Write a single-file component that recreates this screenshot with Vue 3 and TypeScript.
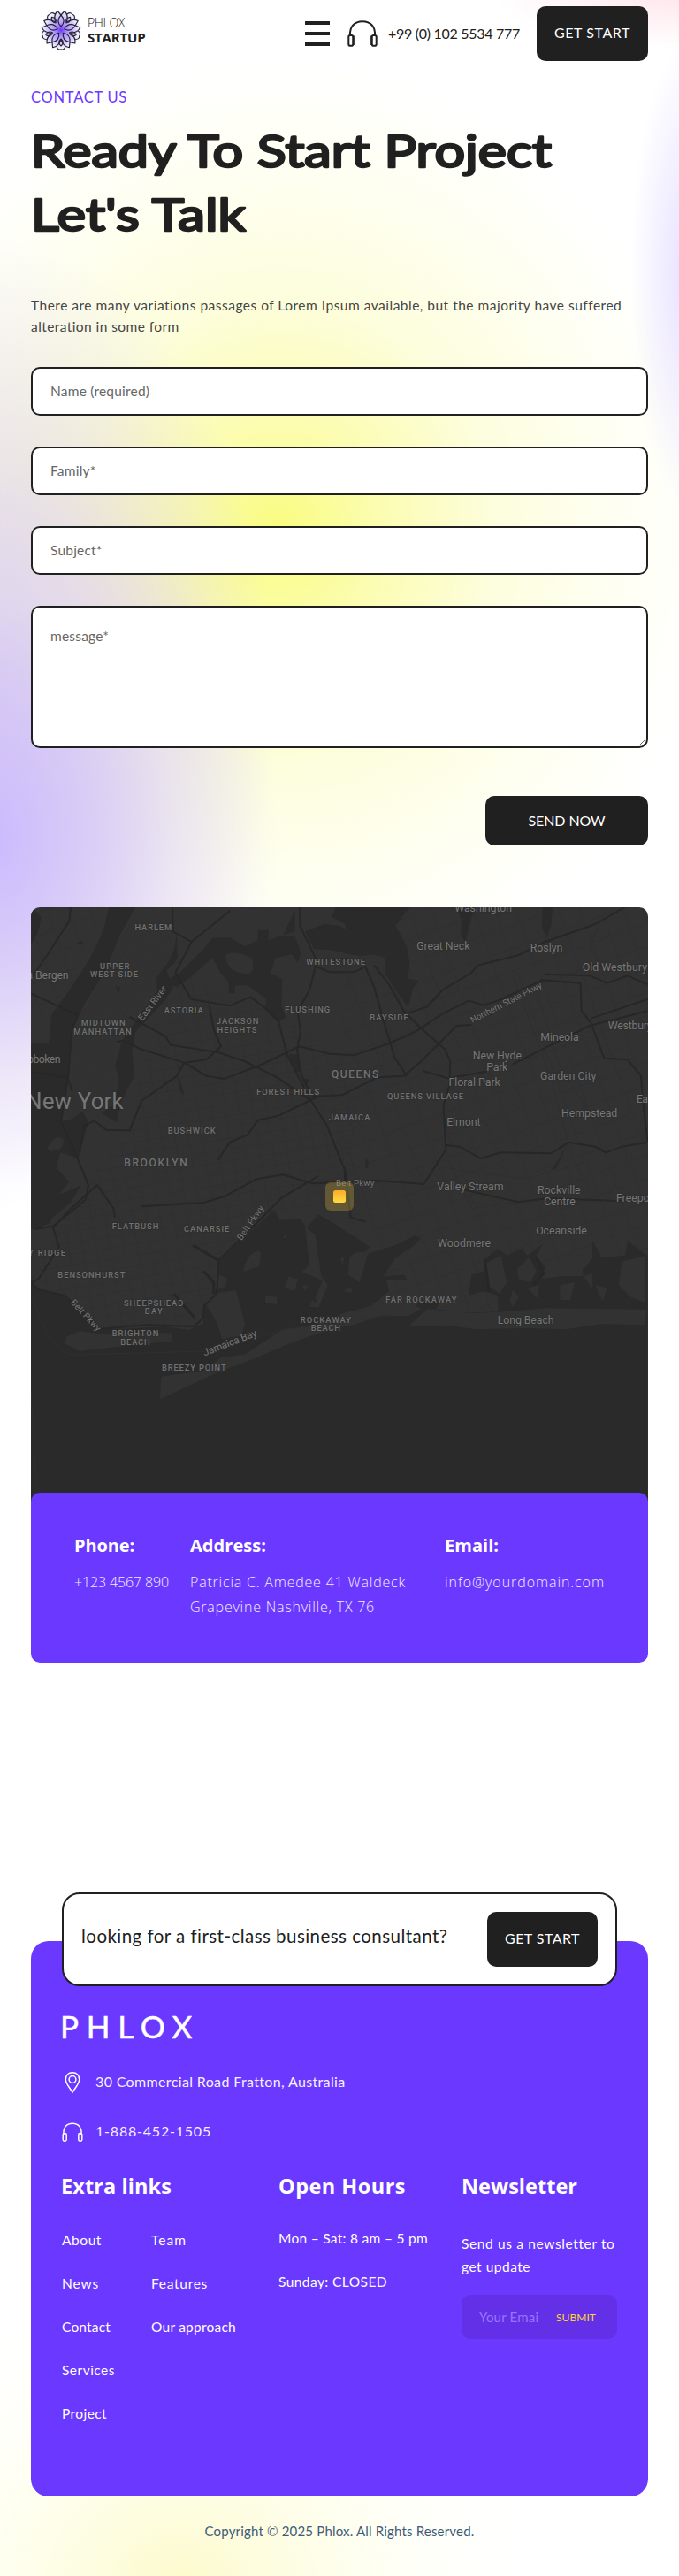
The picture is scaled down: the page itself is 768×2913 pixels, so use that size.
<script setup lang="ts">
import type { Directive } from 'vue'

// Tracks a single line of text so that it fills its design width.
const vFit: Directive<HTMLElement, number> = {
  mounted(el, { value }) {
    const count = (el.textContent ?? '').trim().length
    const natural = el.getBoundingClientRect().width
    if (count > 0) el.style.letterSpacing = `${((value - natural) / count).toFixed(3)}px`
  },
}

interface MapLabel { text: string; x: number; y: number; w: number; size?: number; angle?: number }

const districts: MapLabel[] = [
  { text: 'HARLEM', x: 520, y: 95, w: 125 },
  { text: 'UPPER', x: 389, y: 228, w: 100 },
  { text: 'WEST SIDE', x: 387, y: 256, w: 162 },
  { text: 'MIDTOWN', x: 350, y: 421, w: 150 },
  { text: 'MANHATTAN', x: 348, y: 449, w: 196 },
  { text: 'ASTORIA', x: 623, y: 378, w: 132 },
  { text: 'JACKSON', x: 806, y: 415, w: 143 },
  { text: 'HEIGHTS', x: 804, y: 443, w: 135 },
  { text: 'FLUSHING', x: 1043, y: 374, w: 153 },
  { text: 'WHITESTONE', x: 1139, y: 213, w: 200 },
  { text: 'FOREST HILLS', x: 977, y: 654, w: 213 },
  { text: 'BUSHWICK', x: 650, y: 787, w: 162 },
  { text: 'JAMAICA', x: 1185, y: 741, w: 140 },
  { text: 'BAYSIDE', x: 1320, y: 402, w: 130 },
  { text: 'QUEENS VILLAGE', x: 1443, y: 669, w: 258 },
  { text: 'BROOKLYN', x: 528, y: 896, w: 215, size: 36 },
  { text: 'QUEENS', x: 1205, y: 598, w: 160, size: 36 },
  { text: 'FLATBUSH', x: 459, y: 1110, w: 158 },
  { text: 'CANARSIE', x: 701, y: 1119, w: 154 },
  { text: 'BAY RIDGE', x: 138, y: 1200, w: 168 },
  { text: 'BENSONHURST', x: 310, y: 1274, w: 228 },
  { text: 'SHEEPSHEAD', x: 521, y: 1371, w: 202 },
  { text: 'BAY', x: 521, y: 1399, w: 60 },
  { text: 'BRIGHTON', x: 459, y: 1473, w: 158 },
  { text: 'BEACH', x: 459, y: 1502, w: 100 },
  { text: 'ROCKAWAY', x: 1105, y: 1427, w: 172 },
  { text: 'BEACH', x: 1105, y: 1455, w: 100 },
  { text: 'BREEZY POINT', x: 658, y: 1591, w: 218 },
  { text: 'FAR ROCKAWAY', x: 1429, y: 1358, w: 240 },
]

const towns: MapLabel[] = [
  { text: 'n Bergen', x: 162, y: 260, w: 142 },
  { text: 'Hoboken', x: 137, y: 545, w: 138 },
  { text: 'New York', x: 253, y: 702, w: 332, size: 78 },
  { text: 'Washington', x: 1640, y: 33, w: 195 },
  { text: 'Great Neck', x: 1504, y: 163, w: 181 },
  { text: 'Roslyn', x: 1854, y: 169, w: 110 },
  { text: 'Old Westbury', x: 2086, y: 234, w: 220 },
  { text: 'Westbury', x: 2138, y: 433, w: 150 },
  { text: 'Mineola', x: 1899, y: 470, w: 130 },
  { text: 'New Hyde', x: 1687, y: 535, w: 166 },
  { text: 'Park', x: 1687, y: 573, w: 72 },
  { text: 'Floral Park', x: 1610, y: 623, w: 175 },
  { text: 'Garden City', x: 1928, y: 604, w: 190 },
  { text: 'East Meadow', x: 2262, y: 682, w: 204 },
  { text: 'Elmont', x: 1573, y: 759, w: 115 },
  { text: 'Hempstead', x: 2000, y: 728, w: 190 },
  { text: 'Valley Stream', x: 1596, y: 977, w: 226 },
  { text: 'Rockville', x: 1897, y: 991, w: 146 },
  { text: 'Centre', x: 1899, y: 1029, w: 107 },
  { text: 'Freeport', x: 2160, y: 1017, w: 138 },
  { text: 'Oceanside', x: 1905, y: 1128, w: 173 },
  { text: 'Woodmere', x: 1575, y: 1169, w: 180 },
  { text: 'Long Beach', x: 1784, y: 1431, w: 192 },
  { text: 'Belt Pkwy', x: 1205, y: 962, w: 130, size: 29 },
  { text: 'East River', x: 525, y: 350, w: 138, size: 31, angle: -53 },
  { text: 'Northern State Pkwy', x: 1722, y: 350, w: 268, size: 30, angle: -27 },
  { text: 'Belt Pkwy', x: 858, y: 1094, w: 136, size: 30, angle: -55 },
  { text: 'Belt Pkwy', x: 284, y: 1409, w: 134, size: 30, angle: 47 },
  { text: 'Jamaica Bay', x: 784, y: 1506, w: 192, size: 34, angle: -21 },
]

const fields = ['Name (required)', 'Family*', 'Subject*']
const linksA = [['About', 45], ['News', 42], ['Contact', 55], ['Services', 60], ['Project', 51]] as const
const linksB = [['Team', 40], ['Features', 64], ['Our approach', 96]] as const
const spokes = [0, 72, 144, 216, 288]
</script>

<template>
  <div class="page">
    <header class="header">
      <div class="logo">
        <svg class="flower" viewBox="-25 -25 50 50" width="50" height="50">
          <defs>
            <radialGradient id="glow">
              <stop offset="0" stop-color="#6a30ff" />
              <stop offset=".25" stop-color="#9474fb" stop-opacity=".85" />
              <stop offset=".65" stop-color="#c9bbfc" stop-opacity=".7" />
              <stop offset="1" stop-color="#fff" stop-opacity="0" />
            </radialGradient>
          </defs>
          <circle r="25" fill="url(#glow)" />
          <g fill="none" stroke="#25222f" stroke-width="1.150" stroke-linejoin="round">
            <g v-for="a in spokes" :key="a" :transform="`rotate(${a})`">
              <path d="M0-4C-4-8-4-12.500 0-17C4-12.500 4-8 0-4Z" />
              <path d="M0-17L-4-21.500C-7-18.500-8-14-6.500-9M0-17L4-21.500C7-18.500 8-14 6.500-9" />
              <path d="M7-18C10-20.500 12-19 13-17.500" />
              <path d="M-7-18C-10-20.500-12-19-13-17.500" />
            </g>
            <g v-for="a in spokes" :key="`s${a}`" :transform="`rotate(${a + 36})`">
              <path d="M0-10C-3-12.500-3-15.500 0-18C3-15.500 3-12.500 0-10Z" />
            </g>
          </g>
        </svg>
        <div class="brand">
          <div><span v-fit="42" class="brand-top">PHLOX</span></div>
          <div><span v-fit="65.500" class="brand-bottom">STARTUP</span></div>
        </div>
      </div>
      <div class="burger"><i /><i /><i /></div>
      <svg class="phones" viewBox="0 0 34 30" width="34" height="30" fill="none" stroke="#202020" stroke-width="2">
        <path d="M3 18C2 7 8 1.300 17 1.300S32 7 31 18" />
        <rect x="1.300" y="17" width="5" height="11.700" rx="1.800" />
        <rect x="27.700" y="17" width="5" height="11.700" rx="1.800" />
        <path d="M6.800 17.500v10.500M27.200 17.500v10.500" />
      </svg>
      <div class="tel"><span v-fit="149">+99 (0) 102 5534 777</span></div>
      <a class="btn btn-head"><span v-fit="86">GET START</span></a>
    </header>

    <main class="main">
      <div class="eyebrow"><span v-fit="109">CONTACT US</span></div>
      <h1 class="title">
        <svg width="698" height="170" viewBox="0 0 698 170">
          <text x="0" y="66.700" textLength="589" lengthAdjust="spacingAndGlyphs">Ready To Start Project</text>
          <text x="0" y="138.700" textLength="243" lengthAdjust="spacingAndGlyphs">Let's Talk</text>
        </svg>
      </h1>
      <div class="intro">
        <div><span v-fit="668">There are many variations passages of Lorem Ipsum available, but the majority have suffered</span></div>
        <div><span v-fit="168">alteration in some form</span></div>
      </div>
      <form class="form" @submit.prevent>
        <input v-for="f in fields" :key="f" type="text" :placeholder="f" />
        <textarea placeholder="message*" />
        <button class="btn btn-send" type="button"><span v-fit="87">SEND NOW</span></button>
      </form>

      <section class="map">
        <svg width="698" height="674" viewBox="0 0 698 674">
          <defs>
            <pattern id="streets-a" width="46" height="38" patternUnits="userSpaceOnUse" patternTransform="rotate(-9)">
              <path d="M0 0H46M0 0V38" fill="none" stroke="#2b2b2b" stroke-width="2.500" />
            </pattern>
            <pattern id="streets-b" width="15" height="60" patternUnits="userSpaceOnUse" patternTransform="rotate(30)">
              <path d="M0 0H15M0 0V60" fill="none" stroke="#2c2c2c" stroke-width="2.500" />
            </pattern>
            <pattern id="streets-c" width="68" height="74" patternUnits="userSpaceOnUse" patternTransform="rotate(-20)">
              <path d="M0 0Q30 8 68 0M0 0Q12 38 0 74" fill="none" stroke="#2d2d2d" stroke-width="2.500" />
            </pattern>
            <linearGradient id="pin" x2="0" y2="1">
              <stop stop-color="#ffaa25" /><stop offset="1" stop-color="#ffdc43" />
            </linearGradient>
          </defs>
          <rect width="698" height="674" fill="#323232" />
          <g transform="translate(-35 -6) scale(.33333)">
            <path fill="url(#streets-c)" d="M1160 18H2200V1400H1160ZM105 18H360L180 380H105Z" />
            <path fill="url(#streets-a)" d="M600 240L960 380 1200 560V1060L930 1050 700 1330 640 1440H350L105 1290 300 940 440 780 480 520Z" />
            <path fill="url(#streets-b)" d="M460 40L590 110 580 200 520 290 390 470 390 690 230 730 245 430Z" />

            <g fill="#2a2a2a">
              <path d="M105 480H165L175 380 235 300 300 200 350 100 370 18H460L405 115 360 230 290 340 245 430 235 590 207 745 245 735 280 710 300 745 265 870 205 850 190 900 235 950 200 990 170 1090 105 1110Z" />
              <path d="M600 110L603 190 570 235 587 292 555 340 460 440 448 510 455 590 410 680 397 748 345 718 392 680 402 600 390 555 414 472 470 390 535 300 530 258 570 205 590 165Z" />
              <path d="M540 270L600 288 640 260 720 190 748 240 775 270 777 310 797 310 798 284 840 282 905 330 900 355 945 408 970 392 955 350 958 262 918 240 935 190 990 178 1010 205 1022 175 1000 115 960 115 1000 30V100L910 130 912 95H875L875 130 830 150 780 120 720 122 690 160 650 200 610 240Z" />
              <path d="M1140 18H1390L1342 80 1380 150 1390 205 1385 260 1420 266 1403 290 1385 358 1330 280 1305 240 1308 190 1265 178 1220 182 1200 180 1120 162 1065 160 1035 100 1100 75 1150 80 1172 92V75L1125 50Z" />
              <path d="M1550 18H1610L1590 90 1580 140 1565 110 1565 60ZM1840 18H1875L1870 80 1855 122 1840 90ZM105 18L140 50 130 100 105 145Z" />
              <path d="M600 590L613 610 625 655 612 645ZM980 515L1010 520 1018 575 1000 575ZM390 285L408 288 404 308ZM1025 600L1048 600 1038 630ZM260 140L280 133 282 145ZM1240 870L1250 880 1248 905 1240 900ZM1930 815L1910 850 1870 910 1885 905 1918 840Z" />
              <path d="M200 745Q110 880 120 1110L105 1110V745ZM210 990L275 960 240 1020 130 1110 105 1110V990Z" />
              <path d="M105 1295L140 1320 210 1335 260 1370 300 1410 340 1450 420 1448 560 1440 640 1452 690 1430 692 1360 740 1310 742 1220 800 1165 870 1100 930 1045 950 1080 1020 1075 1040 1105 1080 1060 1140 1095 1255 1170 1225 1200 1275 1185 1340 1165 1410 1130 1427 1142 1405 1165 1340 1210 1300 1270 1370 1265 1385 1285 1310 1280 1320 1320 1260 1370 1200 1385H1280L1400 1388 1420 1360 1500 1345 1480 1380 1560 1395 1690 1390 1690 1335 1640 1320 1590 1335 1600 1265 1650 1250 1640 1215 1690 1175 1720 1200 1770 1175 1790 1200 1840 1160 1820 1200 1850 1240 1830 1280 1900 1270 1980 1245 2010 1210 2010 1150 2040 1205 2120 1200 2130 1150 2197 1200V2100H105Z" />
            </g>
            <g fill="#323232">
              <path d="M765 180Q790 160 855 190Q870 250 830 242Q770 240 765 180ZM160 835Q190 780 215 805Q220 845 170 845ZM565 230L595 205 603 245 575 258Z" />
              <path d="M225 1475L270 1455 340 1465 480 1460 582 1462 584 1490 400 1508 270 1524 220 1498Z" />
              <path d="M680 1335L800 1318 832 1430 820 1470 754 1483 735 1425ZM742 1265L770 1275 765 1305 740 1315Z" />
              <path d="M543 1687L547 1610 690 1590 750 1545 830 1535 960 1450 1050 1440 1180 1390 1400 1365 1430 1380 1385 1405 1290 1405 1200 1435 1140 1445 1000 1490 860 1550 740 1595Z" />
              <path d="M1385 1440L1450 1380 1600 1395 1710 1390 1850 1378 2195 1382 2185 1435 2040 1432 1920 1450 1780 1446 1620 1450 1510 1436Z" />
              <path d="M830 1230Q860 1170 885 1190L880 1235 825 1254ZM900 1335L940 1340 940 1365 900 1360ZM980 1270L1010 1280 1000 1320 965 1310ZM1025 1300L1045 1300 1035 1320ZM1035 1100L1070 1130 1090 1270 1112 1300 1080 1380 1070 1340 1095 1285 1025 1255 1050 1230ZM1060 1350L1085 1375 1050 1374ZM1185 1210Q1200 1180 1250 1190L1220 1290 1182 1265ZM1165 1320L1195 1304 1192 1325ZM960 1140L975 1122 970 1140ZM1155 1210L1170 1200 1163 1230Z" />
              <path d="M1650 1225L1700 1200 1720 1290 1695 1330 1655 1300ZM1755 1245L1795 1205 1820 1250 1800 1290 1760 1280ZM1740 1315L1760 1340 1740 1375 1730 1350ZM1790 1310L1830 1300 1825 1345ZM1895 1200L1970 1200 1980 1270 1900 1270ZM1900 1300L1950 1290 1935 1350 1900 1350ZM1980 1270L2010 1260 2010 1310ZM2020 1300L2060 1310 2045 1355ZM2110 1220L2190 1200V1360L2140 1340 2100 1300Z" />
            </g>
            <g fill="none" stroke="#272727" stroke-width="6" stroke-linejoin="round">
              <path d="M240 18L235 65 160 180 105 260M105 310L265 385 245 430 230 600 207 745 265 875 300 960 290 1010 180 1100 115 1110M105 575L230 597 245 640M440 390L560 455 580 485 740 510 830 540 940 595 1050 670M395 475L420 470 480 500 625 545 700 590 760 600 880 555 1015 490 1120 515 1200 520 1320 480 1410 440 1500 380 1590 335 1640 350 1690 335" />
              <path d="M585 18L587 100 650 135 780 30M650 135L595 240 650 330 780 352 850 322 900 360 945 405 975 520 1050 665 1110 760 1170 910V960M710 350L725 430 750 490 700 535 625 545 600 590 480 675 440 775 360 773 320 742 285 760 270 850" />
              <path d="M1018 18V80L1075 200 1050 300 1010 370 1020 440 1008 500 1020 580 1060 660 1160 655 1280 595 1370 590 1430 540 1550 420 1600 417M1075 220L1120 238H1200L1240 220 1270 290 1300 400 1340 530 1380 590M1270 215L1320 280 1370 370 1430 430 1510 500 1528 540 1525 620 1505 690 1513 840 1440 955M1380 378L1450 355 1500 300 1600 240 1620 215 1760 180 1850 135 2020 75 2120 18" />
              <path d="M1690 335L1840 265 1970 275 1973 370 2005 410 2050 530 2130 535 2175 590 2180 660 2197 810M1850 245L2000 250 2060 275 2130 250 2197 280M2197 330L2005 395M2197 370L2000 420 1740 550M1435 573L1520 598 1650 575M1513 825L1560 830 1630 870 1700 850 1870 853 1930 815 2020 830 2055 850 2110 830 2197 815" />
              <path d="M740 875L780 815 840 790 875 740 945 725 1080 660M105 1290L130 1280 200 1170 180 1105 240 1040 330 960 385 1040 390 1070M480 1033L690 1020 760 1000 870 940 960 925 1060 955 1280 945 1440 957M105 1290L130 1315 220 1335 340 1448 500 1435 660 1440 690 1410 692 1370 735 1330 742 1215 820 1140 960 1000 1080 930M1170 900L1190 1070 1240 1085M1570 975L1700 1005 1760 1018 1860 1005 2110 1015" />
              <path stroke-width="9" d="M655 1165L740 1215M690 1252L725 1290 725 1330M590 1330L660 1410M1645 1215L1660 1320M1820 1205L1845 1260 1810 1300" />
              <path stroke="#2f2f2f" stroke-width="3" d="M110 1340Q170 1530 250 1536L700 1524 860 1480 980 1448 1320 1400M105 1660L125 2010M2060 18L2000 150 2040 220M1740 250L1870 600 1940 860 2010 990M1500 900L1780 940 2000 880M1820 300L1900 560 2030 760M1510 850L1600 1040 1740 1020" />
            </g>
            <g class="labels">
              <text
                v-for="(l, i) in districts" :key="`d${i}`" class="district" :x="l.x - l.w / 2" :y="l.y"
                :font-size="l.size ?? 28" :textLength="l.w">{{ l.text }}</text>
              <text
                v-for="(l, i) in towns" :key="`t${i}`" :x="l.x - l.w / 2" :y="l.y" :font-size="l.size ?? 37"
                :textLength="l.w" :transform="l.angle ? `rotate(${l.angle} ${l.x} ${l.y})` : undefined">{{ l.text }}</text>
            </g>
          </g>
          <rect x="333" y="311" width="32" height="32" rx="6" fill="#ffd83d" fill-opacity=".24" />
          <rect x="342" y="320" width="14" height="14" rx="2.500" fill="url(#pin)" />
        </svg>
      </section>

      <section class="info">
        <div class="info-phone">
          <h3><span v-fit="68">Phone:</span></h3>
          <p><span v-fit="107">+123 4567 890</span></p>
        </div>
        <div class="info-address">
          <h3><span v-fit="86">Address:</span></h3>
          <p><span v-fit="244">Patricia C. Amedee 41 Waldeck</span></p>
          <p><span v-fit="209">Grapevine Nashville, TX 76</span></p>
        </div>
        <div>
          <h3><span v-fit="61">Email:</span></h3>
          <p><span v-fit="181">info@yourdomain.com</span></p>
        </div>
      </section>
    </main>

    <footer class="footer">
      <section class="cta">
        <div class="cta-text"><span v-fit="414">looking for a first-class business consultant?</span></div>
        <a class="btn btn-cta"><span v-fit="85">GET START</span></a>
      </section>
      <div class="panel">
        <div class="wordmark"><span v-fit="158">PHLOX</span></div>
        <div class="contact-row">
          <svg width="24" height="26" viewBox="0 0 24 26" fill="none" stroke="#fff" stroke-width="1.500">
            <path d="M12 24C9 19 4.300 14.500 4.300 9.500C4.300 4.500 7.500 1.700 12 1.700S19.700 4.500 19.700 9.500C19.700 14.500 15 19 12 24Z" />
            <circle cx="12" cy="9.500" r="3.900" />
          </svg>
          <span v-fit="282">30 Commercial Road Fratton, Australia</span>
        </div>
        <div class="contact-row second">
          <svg width="24" height="26" viewBox="0 0 24 26" fill="none" stroke="#fff" stroke-width="1.500">
            <path d="M2 16C1.300 8 5 3.200 12 3.200S22.700 8 22 16" />
            <rect x="1.200" y="14.500" width="4" height="8.700" rx="1.600" />
            <rect x="18.800" y="14.500" width="4" height="8.700" rx="1.600" />
          </svg>
          <span v-fit="131">1-888-452-1505</span>
        </div>
        <div class="columns">
          <div class="col-links">
            <h2><span v-fit="125">Extra links</span></h2>
            <div class="lists">
              <ul><li v-for="[t, w] in linksA" :key="t"><span v-fit="w">{{ t }}</span></li></ul>
              <ul><li v-for="[t, w] in linksB" :key="t"><span v-fit="w">{{ t }}</span></li></ul>
            </div>
          </div>
          <div class="col-hours">
            <h2><span v-fit="144">Open Hours</span></h2>
            <ul>
              <li><span v-fit="169">Mon – Sat: 8 am – 5 pm</span></li>
              <li><span v-fit="123">Sunday: CLOSED</span></li>
            </ul>
          </div>
          <div class="col-news">
            <h2><span v-fit="131">Newsletter</span></h2>
            <p><span v-fit="173">Send us a newsletter to</span></p>
            <p><span v-fit="78">get update</span></p>
            <form class="subscribe" @submit.prevent>
              <input type="email" placeholder="Your Email" />
              <button type="button"><span v-fit="45">SUBMIT</span></button>
            </form>
          </div>
        </div>
      </div>
      <div class="copyright"><span v-fit="305">Copyright © 2025 Phlox. All Rights Reserved.</span></div>
    </footer>
  </div>
</template>

<style>
body { margin: 0; background: #fff; }
</style>

<style scoped>
.page {
  box-sizing: border-box;
  width: 768px;
  height: 2913px;
  overflow: hidden;
  color: #202020;
  font-family: Lato, "Open Sans", sans-serif;
  font-size: 16px;
  background:
    radial-gradient(ellipse 210px 60px at 768px -5px, rgba(255, 222, 230, .75), rgba(255, 230, 235, 0)),
    radial-gradient(ellipse 72px 270px at 785px 310px, rgba(217, 207, 255, .7), rgba(230, 225, 255, 0)),
    radial-gradient(ellipse 330px 420px at -15px 950px, rgba(201, 183, 255, .92), rgba(208, 192, 252, .7) 30%, rgba(225, 215, 248, .42) 65%, rgba(255, 255, 255, 0)),
    radial-gradient(ellipse 330px 540px at -20px 800px, rgba(197, 175, 230, .65), rgba(212, 196, 228, .45) 50%, rgba(240, 235, 240, 0)),
    radial-gradient(ellipse 490px 530px at 315px 600px, rgba(249, 252, 125, .98), rgba(251, 252, 164, .85) 24%, rgba(252, 253, 209, .75) 50%, rgba(254, 255, 232, .6) 76%, rgba(255, 255, 255, 0)),
    radial-gradient(ellipse 390px 350px at 205px 2930px, #fdfacb, rgba(253, 253, 219, .7) 35%, rgba(255, 255, 240, .4) 70%, rgba(255, 255, 255, 0)),
    #fff;
}
span { white-space: nowrap; }
h1, h2, h3, p, ul { margin: 0; padding: 0; }
ul { list-style: none; }

.btn {
  box-sizing: border-box;
  display: flex;
  align-items: center;
  justify-content: center;
  border: 0;
  border-radius: 10px;
  background: #202020;
  color: #fff;
  font: 16px/24px Lato, sans-serif;
}

.header { display: flex; height: 77px; padding: 0 35px 0 44px; box-sizing: border-box; }
.header > * { flex-shrink: 0; }
.logo { display: flex; width: 301px; }
.flower { margin-top: 9px; }
.brand { margin: 17px 0 0 5px; font-family: "Open Sans", sans-serif; line-height: 17px; }
.brand div { height: 17px; }
.brand-top { font-size: 14px; font-weight: 300; }
.brand-bottom { font-size: 15px; font-weight: 700; }
.burger { display: flex; flex-direction: column; gap: 8px; width: 28px; margin-top: 24px; }
.burger i { height: 4px; background: #202020; }
.phones { margin: 23px 0 0 20px; }
.tel { width: 168px; margin: 26px 0 0 12px; line-height: 24px; }
.btn-head { width: 126px; height: 62px; margin-top: 7px; padding-bottom: 2px; }

.main { padding: 21px 35px 0; }
.eyebrow { height: 24px; line-height: 24px; font-size: 16.500px; color: #6b38ff; }
.title { height: 170px; }
.title svg { display: block; overflow: visible; }
.title text {
  font: 400 51px Lato, sans-serif;
  fill: #202020;
  stroke: #202020;
  stroke-width: 2.600px;
  stroke-linejoin: round;
}
.intro { margin-top: 41px; font-size: 15.500px; line-height: 24px; color: #454545; }
.form { display: flex; flex-direction: column; margin-top: 34px; }
.form input, .form textarea {
  box-sizing: border-box;
  width: 100%;
  border: 2px solid #202020;
  border-radius: 10px;
  background: #fff;
  color: #202020;
  font: 15.500px/24px Lato, sans-serif;
  letter-spacing: .2px;
  outline: 0;
}
.form input { height: 55px; margin-bottom: 35px; padding: 0 20px 2px; }
.form textarea { display: block; height: 161px; padding: 20px; }
.form ::placeholder { color: #666; opacity: 1; }
.btn-send { align-self: flex-end; width: 184px; height: 56px; margin-top: 54px; padding: 0; }

.map { height: 674px; margin-top: 70px; border-radius: 10px 10px 0 0; overflow: hidden; }
.map svg { display: block; }
.labels text { font-family: Roboto, sans-serif; fill: #777; stroke: #2b2b2b; stroke-width: 3px; paint-order: stroke; }
.labels .district { font-weight: 500; fill: #717171; }

.info {
  position: relative;
  box-sizing: border-box;
  display: flex;
  height: 192px;
  margin-top: -12px;
  padding: 44px 49px 0;
  border-radius: 10px;
  background: #6b38ff;
  color: #fff;
  font-family: "Open Sans", sans-serif;
}
.info h3 { height: 43px; line-height: 31px; font-size: 20px; font-weight: 700; }
.info p { height: 28px; line-height: 28px; font-size: 16px; font-weight: 300; color: #f3efff; }
.info-phone { width: 131px; }
.info-address { width: 288px; }

.footer { margin-top: 260px; padding: 0 35px; }
.cta {
  position: relative;
  box-sizing: border-box;
  display: flex;
  justify-content: space-between;
  height: 106px;
  margin: 0 35px;
  padding: 20px;
  border: 2px solid #202020;
  border-radius: 20px;
  background: #fff;
}
.cta-text { margin-top: 11px; font-size: 20.500px; line-height: 32px; }
.btn-cta { width: 125px; height: 62px; padding-bottom: 2px; }
.panel {
  box-sizing: border-box;
  height: 628px;
  margin-top: -51px;
  padding: 76px 35px 0;
  border-radius: 20px;
  background: #6b38ff;
  color: #fff;
}
.wordmark { height: 40px; margin-left: -2px; font-size: 35px; line-height: 40px; -webkit-text-stroke: .5px #fff; }
.contact-row { display: flex; gap: 14px; height: 26px; margin-top: 31px; color: #f5f1ff; line-height: 24px; }
.contact-row.second { margin-top: 30px; }
.columns { display: flex; margin-top: 33px; }
h2 { height: 32px; font: 700 23.500px/31px "Open Sans", sans-serif; }
.col-links { width: 246px; margin-left: -1px; }
.lists { display: flex; margin: 32px 0 0 1px; }
.lists ul { width: 101px; }
.columns li { height: 49px; line-height: 25px; font-size: 15.500px; }
.col-hours { width: 207px; }
.col-hours ul { margin-top: 30px; }
.col-news { width: 176px; }
.col-news p { height: 26px; line-height: 26px; font-size: 15.500px; }
.col-news h2 { margin-bottom: 35px; }
.subscribe {
  box-sizing: border-box;
  display: flex;
  height: 50px;
  margin-top: 19px;
  padding: 0 24px 0 20px;
  border-radius: 10px;
  background: #6330e8;
}
.subscribe input { width: 66px; padding: 0; border: 0; background: none; color: #fff; font: 15px Lato, sans-serif; letter-spacing: .2px; outline: 0; }
.subscribe ::placeholder { color: #9876fa; opacity: 1; }
.subscribe button { margin-left: 21px; padding: 0; border: 0; background: none; color: #ffd52e; font: 12px Lato, sans-serif; }
.copyright { margin-top: 27px; text-align: center; font-size: 15px; line-height: 24px; color: #405b78; }
</style>
